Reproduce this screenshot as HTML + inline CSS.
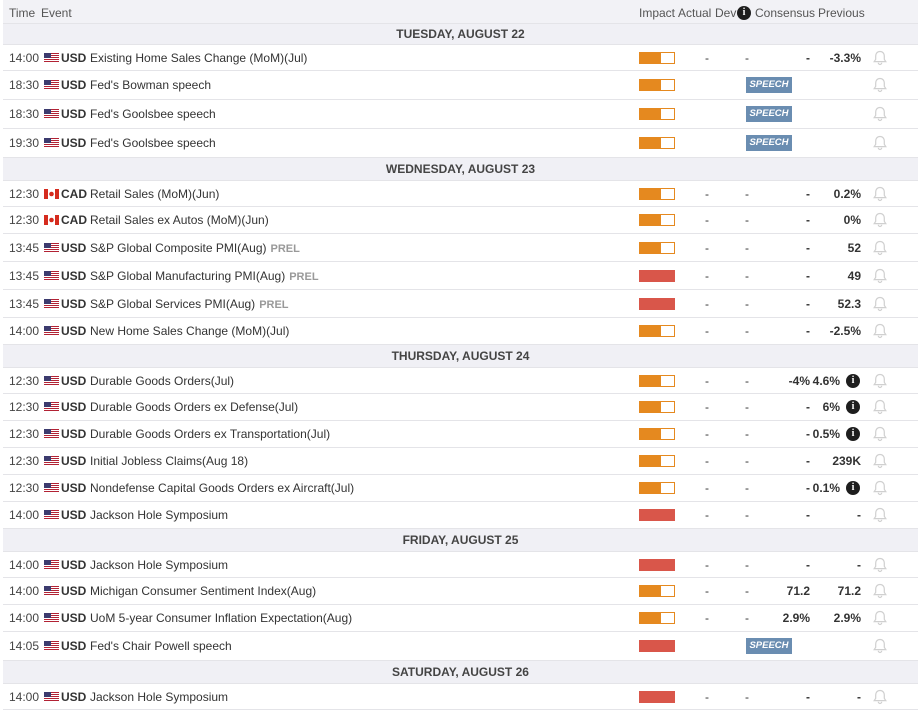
<!DOCTYPE html><html><head><style>
body{margin:0;width:919px;height:712px;background:#fff;font-family:"Liberation Sans",sans-serif;font-size:12px;color:#333;position:relative;overflow:hidden}
.r{position:absolute;left:3px;width:915px;border-bottom:1px solid #e4e4e8;box-sizing:border-box}
.r>*{position:absolute;top:0;white-space:nowrap}
.h{background:#f2f2f6;color:#555}
.d{background:#f0f0f5;text-align:center;font-weight:bold;color:#444;font-size:12px}
.t{left:6px;color:#444}
.f{left:41px;top:50%!important;margin-top:-5px;width:15px;height:10px}
.c{left:58px;font-weight:bold;color:#333}
.e{left:87px}
.p{color:#999;font-weight:bold;font-size:11px;margin-left:4px}
.b{left:636px;top:50%!important;margin-top:-6px;width:36px;height:12px;box-sizing:border-box;border:1.5px solid #e5891f;background:linear-gradient(90deg,#e5891f 62%,#fff 62%)}
.b.red{background:#d9564a;border-color:#d9564a}
.a{left:702px}.v{left:742px}
.cs{right:108px;font-weight:bold}
.pv{right:57px;font-weight:bold}
.pv2{right:78px;font-weight:bold}
.i{left:843px;top:50%!important;margin-top:-7px;width:14px;height:14px;border-radius:50%;background:#1e1e1e;color:#fff;font-size:10px;font-weight:bold;text-align:center;line-height:14px;font-family:"Liberation Serif",serif}
.bl{left:869px;top:50%!important;margin-top:-8px}
.s{left:743px;top:50%!important;margin-top:-8px;width:46px;height:16px;background:#6a8db1;color:#fff;font-size:9.5px;font-weight:bold;font-style:italic;text-align:center;line-height:16px}
</style></head><body>
<svg width="0" height="0" style="position:absolute"><defs>
<symbol id="us" viewBox="0 0 15 10"><rect width="15" height="10" fill="#fff"/><g fill="#b22234"><rect y="0" width="15" height="1"/><rect y="2" width="15" height="1"/><rect y="4" width="15" height="1"/><rect y="6" width="15" height="1"/><rect y="8" width="15" height="1"/></g><rect width="7" height="5" fill="#3c3b6e"/></symbol>
<symbol id="ca" viewBox="0 0 15 10"><rect width="15" height="10" fill="#fff"/><rect width="4" height="10" fill="#d52b1e"/><rect x="11" width="4" height="10" fill="#d52b1e"/><circle cx="7.5" cy="5" r="2.3" fill="#d52b1e"/></symbol>
<symbol id="bell" viewBox="0 0 16 16"><path d="M8 1.5c-2.7 0-4.3 2-4.3 4.5v3.3L2.2 11.6h11.6L12.3 9.3V6c0-2.5-1.6-4.5-4.3-4.5z M6.3 12.8a1.7 1.7 0 0 0 3.4 0" fill="none" stroke="#d0d0d0" stroke-width="1.2"/></symbol>
</defs></svg>

<div class="r h" style="top:0;height:24px;line-height:26px"><span style="left:6px">Time</span><span style="left:38px">Event</span><span style="left:636px">Impact</span><span style="left:675px">Actual</span><span style="left:712px">Dev</span><span class="i" style="left:734px;margin-top:-6px">i</span><span style="left:752px">Consensus</span><span style="left:815px">Previous</span></div>

<div class="r d" style="top:24px;height:21px;line-height:21px"><span style="left:0;right:0">TUESDAY, AUGUST 22</span></div>
<div class="r" style="top:45px;height:26px;line-height:26px"><span class="t">14:00</span><svg class="f"><use href="#us"/></svg><span class="c">USD</span><span class="e">Existing Home Sales Change (MoM)(Jul)</span><span class="b"></span><span class="a">-</span><span class="v">-</span><span class="cs">-</span><span class="pv">-3.3%</span><svg class="bl" width="16" height="16"><use href="#bell"/></svg></div>
<div class="r" style="top:71px;height:29px;line-height:29px"><span class="t">18:30</span><svg class="f"><use href="#us"/></svg><span class="c">USD</span><span class="e">Fed's Bowman speech</span><span class="b"></span><span class="s">SPEECH</span><svg class="bl" width="16" height="16"><use href="#bell"/></svg></div>
<div class="r" style="top:100px;height:29px;line-height:29px"><span class="t">18:30</span><svg class="f"><use href="#us"/></svg><span class="c">USD</span><span class="e">Fed's Goolsbee speech</span><span class="b"></span><span class="s">SPEECH</span><svg class="bl" width="16" height="16"><use href="#bell"/></svg></div>
<div class="r" style="top:129px;height:29px;line-height:29px"><span class="t">19:30</span><svg class="f"><use href="#us"/></svg><span class="c">USD</span><span class="e">Fed's Goolsbee speech</span><span class="b"></span><span class="s">SPEECH</span><svg class="bl" width="16" height="16"><use href="#bell"/></svg></div>

<div class="r d" style="top:158px;height:23px;line-height:23px"><span style="left:0;right:0">WEDNESDAY, AUGUST 23</span></div>
<div class="r" style="top:181px;height:26px;line-height:26px"><span class="t">12:30</span><svg class="f"><use href="#ca"/></svg><span class="c">CAD</span><span class="e">Retail Sales (MoM)(Jun)</span><span class="b"></span><span class="a">-</span><span class="v">-</span><span class="cs">-</span><span class="pv">0.2%</span><svg class="bl" width="16" height="16"><use href="#bell"/></svg></div>
<div class="r" style="top:207px;height:27px;line-height:27px"><span class="t">12:30</span><svg class="f"><use href="#ca"/></svg><span class="c">CAD</span><span class="e">Retail Sales ex Autos (MoM)(Jun)</span><span class="b"></span><span class="a">-</span><span class="v">-</span><span class="cs">-</span><span class="pv">0%</span><svg class="bl" width="16" height="16"><use href="#bell"/></svg></div>
<div class="r" style="top:234px;height:28px;line-height:28px"><span class="t">13:45</span><svg class="f"><use href="#us"/></svg><span class="c">USD</span><span class="e">S&amp;P Global Composite PMI(Aug)<span class="p">PREL</span></span><span class="b"></span><span class="a">-</span><span class="v">-</span><span class="cs">-</span><span class="pv">52</span><svg class="bl" width="16" height="16"><use href="#bell"/></svg></div>
<div class="r" style="top:262px;height:28px;line-height:28px"><span class="t">13:45</span><svg class="f"><use href="#us"/></svg><span class="c">USD</span><span class="e">S&amp;P Global Manufacturing PMI(Aug)<span class="p">PREL</span></span><span class="b red"></span><span class="a">-</span><span class="v">-</span><span class="cs">-</span><span class="pv">49</span><svg class="bl" width="16" height="16"><use href="#bell"/></svg></div>
<div class="r" style="top:290px;height:28px;line-height:28px"><span class="t">13:45</span><svg class="f"><use href="#us"/></svg><span class="c">USD</span><span class="e">S&amp;P Global Services PMI(Aug)<span class="p">PREL</span></span><span class="b red"></span><span class="a">-</span><span class="v">-</span><span class="cs">-</span><span class="pv">52.3</span><svg class="bl" width="16" height="16"><use href="#bell"/></svg></div>
<div class="r" style="top:318px;height:27px;line-height:27px"><span class="t">14:00</span><svg class="f"><use href="#us"/></svg><span class="c">USD</span><span class="e">New Home Sales Change (MoM)(Jul)</span><span class="b"></span><span class="a">-</span><span class="v">-</span><span class="cs">-</span><span class="pv">-2.5%</span><svg class="bl" width="16" height="16"><use href="#bell"/></svg></div>

<div class="r d" style="top:345px;height:23px;line-height:23px"><span style="left:0;right:0">THURSDAY, AUGUST 24</span></div>
<div class="r" style="top:368px;height:26px;line-height:26px"><span class="t">12:30</span><svg class="f"><use href="#us"/></svg><span class="c">USD</span><span class="e">Durable Goods Orders(Jul)</span><span class="b"></span><span class="a">-</span><span class="v">-</span><span class="cs">-4%</span><span class="pv2">4.6%</span><span class="i">i</span><svg class="bl" width="16" height="16"><use href="#bell"/></svg></div>
<div class="r" style="top:394px;height:27px;line-height:27px"><span class="t">12:30</span><svg class="f"><use href="#us"/></svg><span class="c">USD</span><span class="e">Durable Goods Orders ex Defense(Jul)</span><span class="b"></span><span class="a">-</span><span class="v">-</span><span class="cs">-</span><span class="pv2">6%</span><span class="i">i</span><svg class="bl" width="16" height="16"><use href="#bell"/></svg></div>
<div class="r" style="top:421px;height:27px;line-height:27px"><span class="t">12:30</span><svg class="f"><use href="#us"/></svg><span class="c">USD</span><span class="e">Durable Goods Orders ex Transportation(Jul)</span><span class="b"></span><span class="a">-</span><span class="v">-</span><span class="cs">-</span><span class="pv2">0.5%</span><span class="i">i</span><svg class="bl" width="16" height="16"><use href="#bell"/></svg></div>
<div class="r" style="top:448px;height:27px;line-height:27px"><span class="t">12:30</span><svg class="f"><use href="#us"/></svg><span class="c">USD</span><span class="e">Initial Jobless Claims(Aug 18)</span><span class="b"></span><span class="a">-</span><span class="v">-</span><span class="cs">-</span><span class="pv">239K</span><svg class="bl" width="16" height="16"><use href="#bell"/></svg></div>
<div class="r" style="top:475px;height:27px;line-height:27px"><span class="t">12:30</span><svg class="f"><use href="#us"/></svg><span class="c">USD</span><span class="e">Nondefense Capital Goods Orders ex Aircraft(Jul)</span><span class="b"></span><span class="a">-</span><span class="v">-</span><span class="cs">-</span><span class="pv2">0.1%</span><span class="i">i</span><svg class="bl" width="16" height="16"><use href="#bell"/></svg></div>
<div class="r" style="top:502px;height:27px;line-height:27px"><span class="t">14:00</span><svg class="f"><use href="#us"/></svg><span class="c">USD</span><span class="e">Jackson Hole Symposium</span><span class="b red"></span><span class="a">-</span><span class="v">-</span><span class="cs">-</span><span class="pv">-</span><svg class="bl" width="16" height="16"><use href="#bell"/></svg></div>

<div class="r d" style="top:529px;height:23px;line-height:23px"><span style="left:0;right:0">FRIDAY, AUGUST 25</span></div>
<div class="r" style="top:552px;height:26px;line-height:26px"><span class="t">14:00</span><svg class="f"><use href="#us"/></svg><span class="c">USD</span><span class="e">Jackson Hole Symposium</span><span class="b red"></span><span class="a">-</span><span class="v">-</span><span class="cs">-</span><span class="pv">-</span><svg class="bl" width="16" height="16"><use href="#bell"/></svg></div>
<div class="r" style="top:578px;height:27px;line-height:27px"><span class="t">14:00</span><svg class="f"><use href="#us"/></svg><span class="c">USD</span><span class="e">Michigan Consumer Sentiment Index(Aug)</span><span class="b"></span><span class="a">-</span><span class="v">-</span><span class="cs">71.2</span><span class="pv">71.2</span><svg class="bl" width="16" height="16"><use href="#bell"/></svg></div>
<div class="r" style="top:605px;height:27px;line-height:27px"><span class="t">14:00</span><svg class="f"><use href="#us"/></svg><span class="c">USD</span><span class="e">UoM 5-year Consumer Inflation Expectation(Aug)</span><span class="b"></span><span class="a">-</span><span class="v">-</span><span class="cs">2.9%</span><span class="pv">2.9%</span><svg class="bl" width="16" height="16"><use href="#bell"/></svg></div>
<div class="r" style="top:632px;height:29px;line-height:29px"><span class="t">14:05</span><svg class="f"><use href="#us"/></svg><span class="c">USD</span><span class="e">Fed's Chair Powell speech</span><span class="b red"></span><span class="s">SPEECH</span><svg class="bl" width="16" height="16"><use href="#bell"/></svg></div>

<div class="r d" style="top:661px;height:23px;line-height:23px"><span style="left:0;right:0">SATURDAY, AUGUST 26</span></div>
<div class="r" style="top:684px;height:26px;line-height:26px"><span class="t">14:00</span><svg class="f"><use href="#us"/></svg><span class="c">USD</span><span class="e">Jackson Hole Symposium</span><span class="b red"></span><span class="a">-</span><span class="v">-</span><span class="cs">-</span><span class="pv">-</span><svg class="bl" width="16" height="16"><use href="#bell"/></svg></div>
</body></html>
